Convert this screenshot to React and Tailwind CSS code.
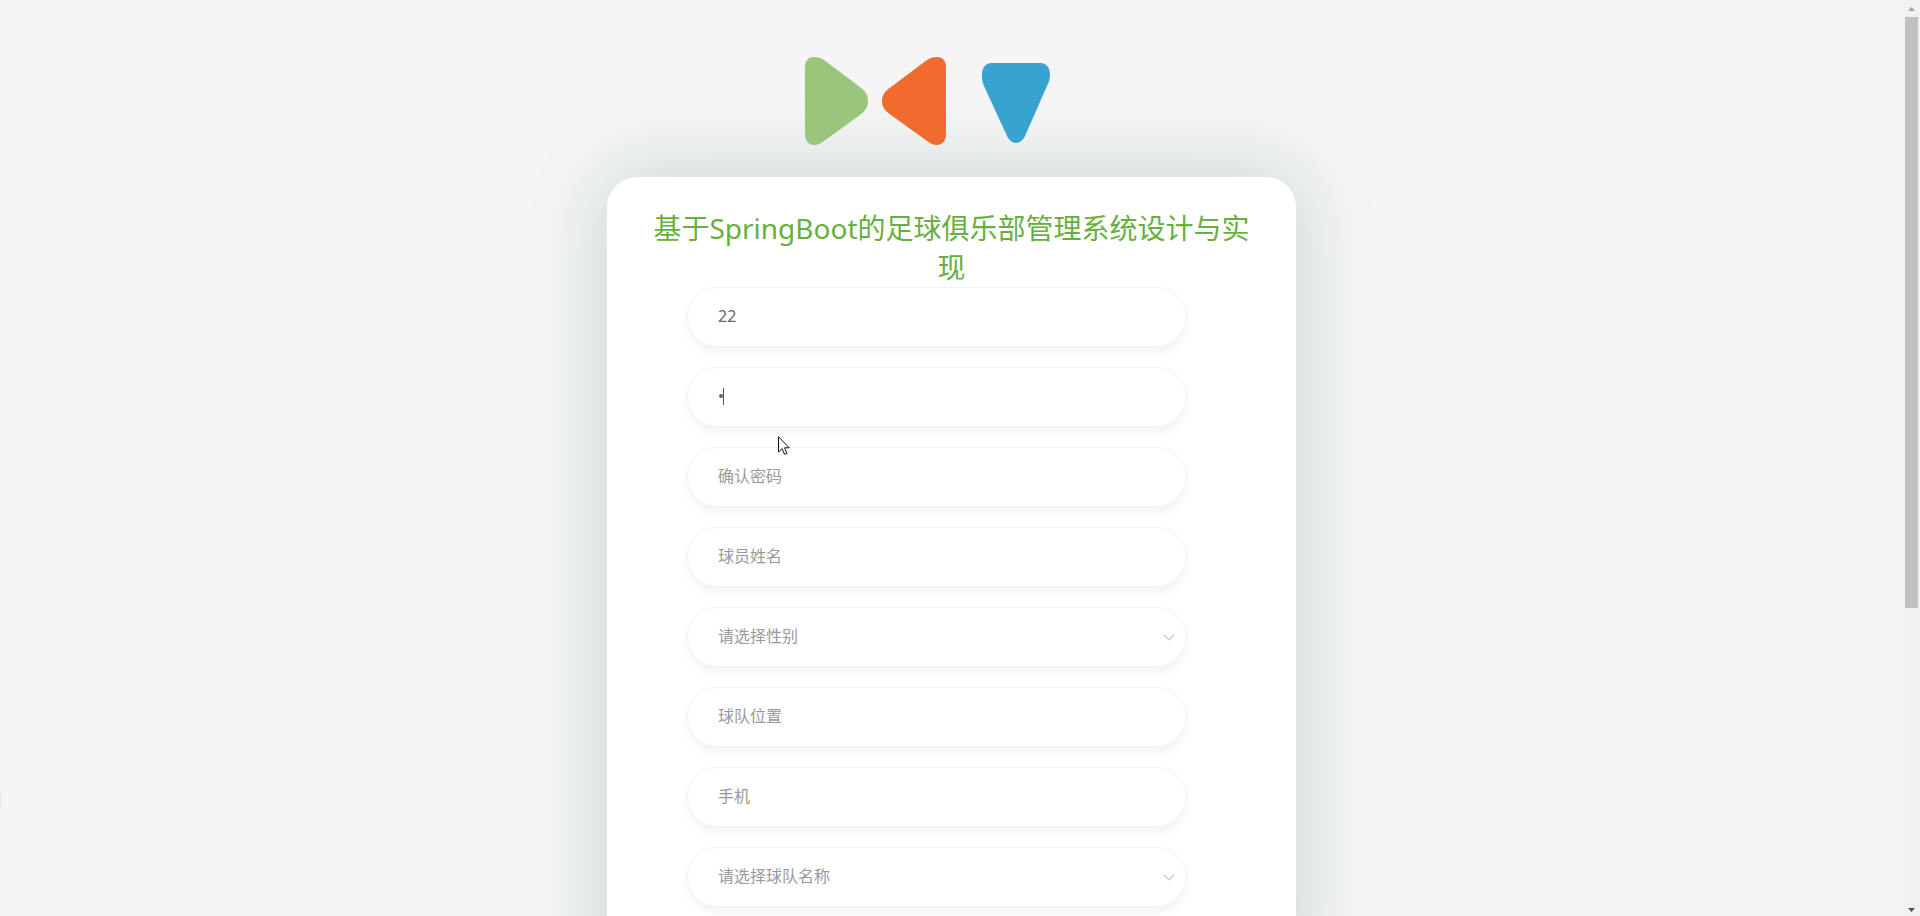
import React, { useState } from 'react'

const FIELDS = [
  { name: 'account', label: '球员账号', type: 'text', value: '22' },
  { name: 'password', label: '密码', type: 'password', value: '2', focused: true },
  { name: 'confirm', label: '确认密码', type: 'password' },
  { name: 'realname', label: '球员姓名', type: 'text' },
  { name: 'gender', label: '请选择性别', options: ['男', '女'] },
  { name: 'position', label: '球队位置', type: 'text' },
  { name: 'phone', label: '手机', type: 'tel' },
  { name: 'team', label: '请选择球队名称', options: [] },
]

const CONTROL =
  'block w-full h-15 px-[30px] pb-0.5 rounded-full border border-[#f2f2f2] bg-white text-base placeholder:text-[#999] shadow-[0_5px_10px_rgba(0,0,0,0.05)] outline-none appearance-none'

const Logo = () => (
  <svg viewBox="0 0 301 177" className="block w-[301px] mx-auto" aria-hidden="true">
    <path fill="#9ac57d" d="M4 67C4 60 8 57 13 57C17 57 20 58 23 60L59 87C64 91 67 95 67 101C67 107 64 111 59 115L23 141C20 143 17 145 13 145C8 145 4 141 4 134Z" />
    <path fill="#f16b2e" d="M145 67C145 60 141 57 136 57C132 57 129 58 126 60L90 87C84 91 81 95 81 101C81 107 84 111 90 115L126 141C129 143 132 145 136 145C141 145 145 141 145 134Z" />
    <path fill="#38a3d1" d="M191 63H239C246 63 249 68 249 75C249 79 248 82 246 86L224 136C222 140 219 143 215 143C211 143 208 140 206 136L183 86C181 82 181 79 181 75C181 68 184 63 191 63Z" />
  </svg>
)

const Field = ({ field }) => {
  const [value, setValue] = useState(field.value || '')
  const onChange = (e) => setValue(e.target.value)

  return (
    <div className="relative">
      {field.options ? (
        <>
          <select
            name={field.name}
            aria-label={field.label}
            value={value}
            onChange={onChange}
            className={`${CONTROL} ${value ? 'text-[#666]' : 'text-[#999]'}`}
          >
            <option value="">{field.label}</option>
            {field.options.map((option) => (
              <option key={option} value={option}>{option}</option>
            ))}
          </select>
          <svg viewBox="0 0 12 12" className="absolute right-3 top-6 w-3 h-3 pointer-events-none" fill="none" stroke="#c0c4cc" strokeWidth="1.2">
            <path d="M1 4L6 9L11 4" />
          </svg>
        </>
      ) : (
        <input
          type={field.type}
          name={field.name}
          aria-label={field.label}
          placeholder={field.label}
          value={value}
          onChange={onChange}
          className={`${CONTROL} text-[#666]`}
        />
      )}
      {field.focused && <span className="absolute left-9 top-[21px] w-px h-[17px] bg-[#555]"></span>}
    </div>
  )
}

const Scrollbar = () => (
  <div className="w-[17px] shrink-0 flex flex-col items-center bg-[#f1f1f1]" aria-hidden="true">
    <svg viewBox="0 0 17 17" className="w-[17px] h-[17px]"><path fill="#a3a3a3" d="M5 11L8.500 7L12 11Z" /></svg>
    <div className="grow w-full px-0.5">
      <div className="h-[67%] bg-[#c1c1c1]"></div>
    </div>
    <svg viewBox="0 0 17 17" className="w-[17px] h-[17px]"><path fill="#505050" d="M5 9L8.500 13L12 9Z" /></svg>
  </div>
)

const App = () => {
  return (
    <div className="relative flex h-screen overflow-hidden bg-[#f5f5f5] font-['Noto_Sans','Noto_Sans_CJK_SC',sans-serif]">
      <main className="flex-1 overflow-hidden">
        <Logo />
        <form className="w-full max-w-[689px] mx-auto px-10 pt-8 pb-20 rounded-[30px] bg-white shadow-[0_0_80px_rgba(0,85,85,0.21)]">
          <h1 className="text-[28px] leading-[39px] text-center text-[#67af3f]">基于SpringBoot的足球俱乐部管理系统设计与实现</h1>
          <div className="flex flex-col gap-5 pl-10 pr-[69px]">
            {FIELDS.map((field) => (
              <Field key={field.name} field={field} />
            ))}
          </div>
        </form>
      </main>
      <Scrollbar />

      <svg viewBox="0 0 12 19" className="absolute left-[778px] top-[436px] w-3 h-[19px] pointer-events-none">
        <path fill="#fff" stroke="#111" d="M.5 .7V16L4 12.700L6.500 18.300L9 17.200L6.500 11.800H11.300Z" />
      </svg>
      <span className="absolute left-0 top-[792px] w-px h-4 rounded-r bg-[#e8e8e8]"></span>
    </div>
  )
}

export default App
